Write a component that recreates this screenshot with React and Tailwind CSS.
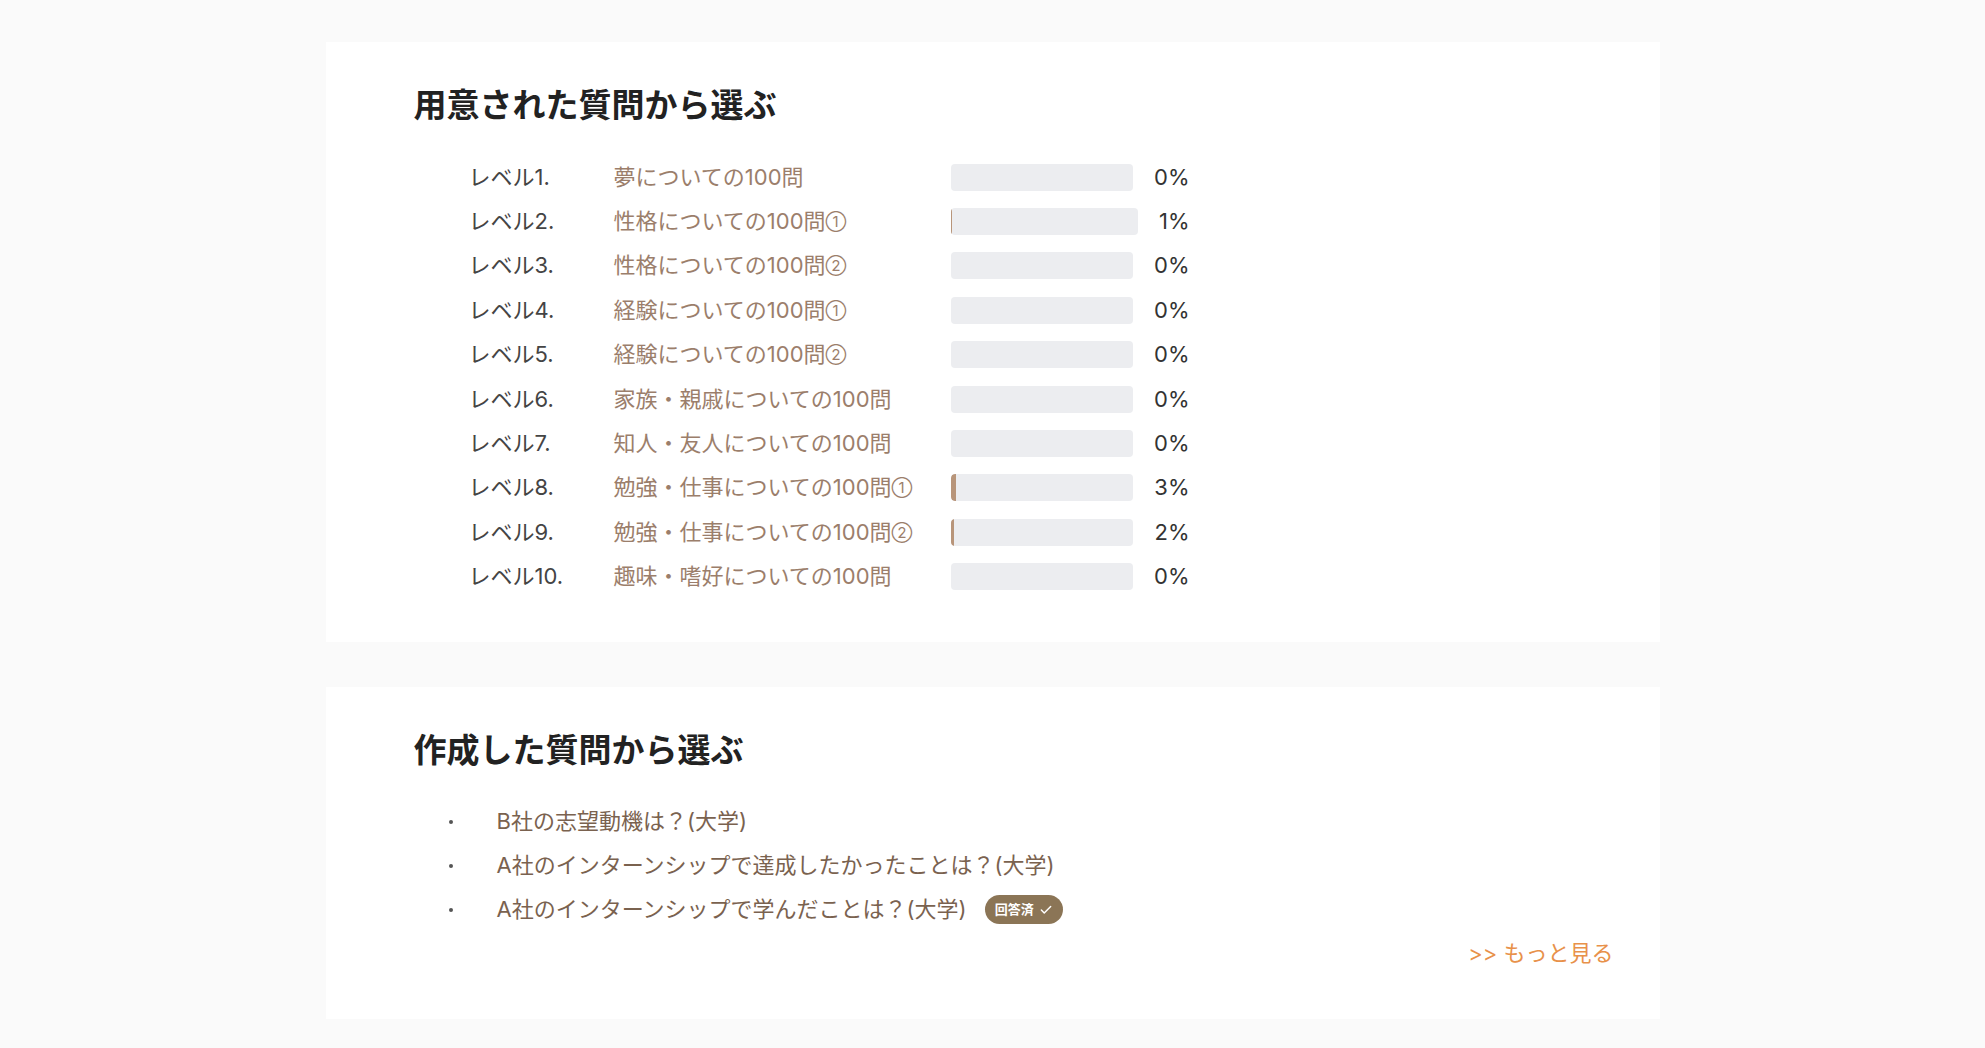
import React from "react";
import { Check } from "lucide-react";

const levels = [
  { label: "レベル1.", title: "夢についての100問", mark: "", pct: 0 },
  { label: "レベル2.", title: "性格についての100問", mark: "①", pct: 1 },
  { label: "レベル3.", title: "性格についての100問", mark: "②", pct: 0 },
  { label: "レベル4.", title: "経験についての100問", mark: "①", pct: 0 },
  { label: "レベル5.", title: "経験についての100問", mark: "②", pct: 0 },
  { label: "レベル6.", title: "家族・親戚についての100問", mark: "", pct: 0 },
  { label: "レベル7.", title: "知人・友人についての100問", mark: "", pct: 0 },
  { label: "レベル8.", title: "勉強・仕事についての100問", mark: "①", pct: 3 },
  { label: "レベル9.", title: "勉強・仕事についての100問", mark: "②", pct: 2 },
  { label: "レベル10.", title: "趣味・嗜好についての100問", mark: "", pct: 0 },
];

const myQuestions = [
  { text: "B社の志望動機は？(大学)", done: false },
  { text: "A社のインターンシップで達成したかったことは？(大学)", done: false },
  { text: "A社のインターンシップで学んだことは？(大学)", done: true },
];

export default function App() {
  return (
    <div
      className="min-h-screen bg-[#fafafa] py-[42px]"
      style={{ fontFamily: "Inter, 'Noto Sans CJK JP', sans-serif" }}
    >
      {/* 用意された質問 */}
      <section className="w-[1334px] mx-auto bg-white pl-[88px] pt-[41px] pb-[43px]">
        <h2 className="text-[33px] leading-[45px] font-bold text-[#222]">
          用意された質問から選ぶ
        </h2>
        <div className="mt-[27px] ml-[55px]">
          {levels.map((lv) => (
            <div key={lv.label} className="flex items-center h-[44.4px] text-[22px]">
              <span className="w-[145px] text-[#444]">{lv.label}</span>
              <span className="w-[337px] text-[#9b7e6b] cursor-pointer">
                {lv.title}
                {lv.mark && <span className="text-[15px] align-[2px]">{lv.mark}</span>}
              </span>
              <div className="w-[239px] flex items-center gap-[21px]">
                <div className="flex-1 h-[27px] rounded-[4px] bg-[#ecedf0] overflow-hidden">
                  <div
                    className="h-full bg-[#b8957a] rounded-l-[4px]"
                    style={{ width: `${lv.pct}%` }}
                  />
                </div>
                <span className="text-[#333]">{lv.pct}%</span>
              </div>
            </div>
          ))}
        </div>
      </section>

      {/* 作成した質問 */}
      <section className="w-[1334px] mx-auto mt-[45px] bg-white pl-[88px] pr-[46px] pt-[41px] pb-[43px]">
        <h2 className="text-[33px] leading-[45px] font-bold text-[#222]">
          作成した質問から選ぶ
        </h2>
        <ul className="mt-[27px] ml-[35px]">
          {myQuestions.map((q) => (
            <li key={q.text} className="flex items-center h-[44px] text-[22px]">
              <span className="w-[48px] flex items-center">
                <span className="w-[4px] h-[4px] rounded-full bg-[#555]" />
              </span>
              <span className="text-[#7a624f] cursor-pointer">{q.text}</span>
              {q.done && (
                <span className="ml-[18px] h-[29px] px-[10px] rounded-full bg-[#8b7556] text-white text-[13px] font-bold flex items-center gap-[5px]">
                  回答済
                  <Check size={14} strokeWidth={2.5} />
                </span>
              )}
            </li>
          ))}
        </ul>
        <div className="flex justify-end h-[44px] items-center">
          <a className="text-[22px] text-[#e8914a] cursor-pointer">&gt;&gt; もっと見る</a>
        </div>
      </section>
    </div>
  );
}
